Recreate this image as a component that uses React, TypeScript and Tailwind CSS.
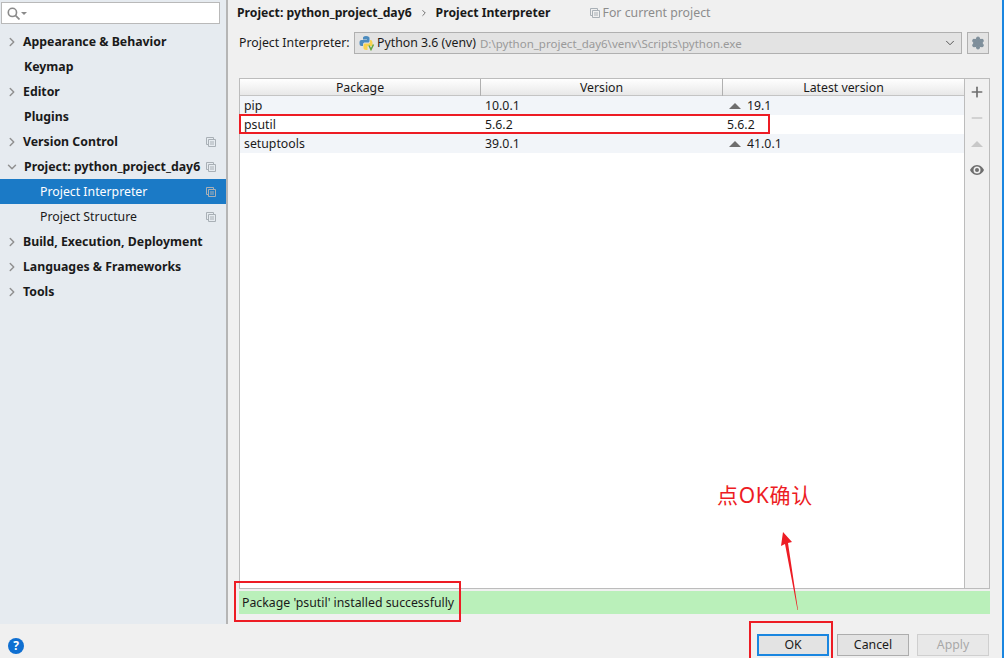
import { ChevronDown, ChevronRight, Minus, Plus, Settings } from "lucide-react";

const NAV = [
  { label: "Appearance & Behavior", arrow: "right" },
  { label: "Keymap", indent: true },
  { label: "Editor", arrow: "right" },
  { label: "Plugins", indent: true },
  { label: "Version Control", arrow: "right", copy: true },
  { label: "Project: python_project_day6", arrow: "down", indent: true, copy: true },
  { label: "Project Interpreter", sub: true, active: true, copy: true },
  { label: "Project Structure", sub: true, copy: true },
  { label: "Build, Execution, Deployment", arrow: "right" },
  { label: "Languages & Frameworks", arrow: "right" },
  { label: "Tools", arrow: "right" },
];

const PACKAGES = [
  { name: "pip", version: "10.0.1", latest: "19.1", up: true },
  { name: "psutil", version: "5.6.2", latest: "5.6.2", up: false },
  { name: "setuptools", version: "39.0.1", latest: "41.0.1", up: true },
];

function CopyIcon({ color = "#a9b0b6" }: { color?: string }) {
  return (
    <svg width="10" height="10" viewBox="0 0 10 10" fill="none" stroke={color}>
      <path d="M2.500 7.500H.5V.5h7v2" />
      <path d="M2.500 2.500h7v7h-7zM4 5h4M4 7h4" />
    </svg>
  );
}

function PythonIcon() {
  return (
    <svg width="16" height="16" viewBox="0 0 16 16" className="shrink-0">
      <path d="M7 1C4.500 1 4 2 4 3v1.500h4V5H2.500C1 5 .5 6.300.5 8s.5 3 2 3H4V9.500C4 8 5 7.500 6 7.500h3c1 0 1.500-.7 1.500-1.500V3c0-1-1-2-3.500-2z" fill="#4b8bbe" />
      <path d="M11 5v1.500C11 8 10 8.500 9 8.500H6c-1 0-1.500.7-1.500 1.500v3c0 1 1 2 3 2h1v-4h5V8c0-1.500-.5-3-2-3z" fill="#f7d34f" />
      <path d="M10 10.500l2 4 2.500-5" fill="none" stroke="#62a53e" strokeWidth="1.500" />
    </svg>
  );
}

function EyeIcon() {
  return (
    <svg width="14" height="10" viewBox="0 0 14 10" className="mt-[18px]">
      <path d="M7 0C3.500 0 1 3 0 5c1 2 3.500 5 7 5s6-3 7-5c-1-2-3.500-5-7-5z" fill="#6e6e6e" />
      <circle cx="7" cy="5" r="3.500" fill="#f0f0f0" />
      <circle cx="7" cy="5" r="2" fill="#6e6e6e" />
    </svg>
  );
}

export default function App() {
  return (
    <div className="relative flex h-[658px] w-[1005px] overflow-hidden bg-white font-['Noto_Sans','Noto_Sans_CJK_SC',sans-serif] text-[12.3px] whitespace-nowrap text-[#1a1a1a]">
      <div className="flex w-[1002px] shrink-0 flex-col bg-[#f0f0f0]">
        <div className="flex min-h-0 flex-1">
          <aside className="flex w-[228px] shrink-0 flex-col border-r-2 border-[#b5b5b5] bg-[#e6ebf0]">
            <div className="mx-[1px] mt-[2px] flex h-[22px] w-[219px] items-center gap-[1px] border border-[#b9b9b9] bg-white pl-[5px]">
              <svg width="13" height="13" viewBox="0 0 12 12" fill="none" stroke="#8a8a8a" strokeWidth="1.500">
                <circle cx="5" cy="5" r="3.800" />
                <path d="M8 8l3.500 3.500" />
              </svg>
              <span className="h-0 w-0 border-x-[3px] border-t-[3px] border-x-transparent border-t-[#8a8a8a]" />
            </div>
            <nav className="mt-[5px] flex flex-col">
              {NAV.map((n) => (
                <div
                  key={n.label}
                  className={`flex h-[25px] items-center ${n.active ? "bg-[#1b7ac6] text-white" : ""} ${n.sub ? "pl-[40px]" : n.indent ? "pl-[24px]" : "pl-[23px]"}`}
                >
                  {n.arrow === "right" && <ChevronRight className="absolute left-[5px] h-[14px] w-[14px] text-[#909090]" strokeWidth={2.500} />}
                  {n.arrow === "down" && <ChevronDown className="absolute left-[5px] h-[14px] w-[14px] text-[#909090]" strokeWidth={2.500} />}
                  <span className={n.sub ? "pt-[1px]" : "pt-[1px] text-[12.3px] font-bold"}>{n.label}</span>
                  {n.copy && (
                    <span className="ml-auto pr-[10px]">
                      <CopyIcon />
                    </span>
                  )}
                </div>
              ))}
            </nav>
          </aside>

          <main className="flex min-w-0 flex-1 flex-col pl-[9px] pr-[12px]">
            <div className="flex h-[26px] items-center text-[12.2px] font-bold">
              <span>Project: python_project_day6</span>
              <ChevronRight className="mx-[7px] h-[10px] w-[10px] text-[#555]" strokeWidth={2} />
              <span>Project Interpreter</span>
              <span className="ml-[39px] mr-[3px] font-normal">
                <CopyIcon />
              </span>
              <span className="text-[12.3px] font-normal text-[#8c8c8c]">For current project</span>
            </div>

            <div className="mt-[6px] flex h-[22px] items-center pl-[2px]">
              <span className="w-[115px] shrink-0">Project Interpreter:</span>
              <div className="flex h-[22px] w-[608px] items-center border border-[#b0b0b0] bg-[#e3e3e3] pl-[4px] pr-[4px]">
                <PythonIcon />
                <span className="ml-[2px] pt-[1px]">Python 3.6 (venv)</span>
                <span className="ml-[4px] pt-[1px] text-[11.5px] text-[#9a9a9a]">D:\python_project_day6\venv\Scripts\python.exe</span>
                <ChevronDown className="ml-auto h-[14px] w-[14px] text-[#444]" strokeWidth={1.500} />
              </div>
              <div className="ml-[5px] flex h-[22px] w-[22px] items-center justify-center border border-[#b0b0b0] bg-[#e3e3e3]">
                <Settings className="h-[14px] w-[14px] fill-[#7f8f9b] text-[#7f8f9b]" />
              </div>
            </div>

            <div className="mt-[24px] ml-[2px] flex min-h-0 flex-1 border border-[#bcbcbc] bg-white">
              <div className="flex min-w-0 flex-1 flex-col">
                <div className="flex h-[17px] items-center border-b border-[#c4c4c4] bg-gradient-to-b from-white to-[#e8e8e8] leading-[16px]">
                  <span className="w-[241px] border-r border-[#b0b0b0] pt-[1px] text-center">Package</span>
                  <span className="w-[242px] border-r border-[#b0b0b0] pt-[1px] text-center">Version</span>
                  <span className="flex-1 pt-[1px] text-center">Latest version</span>
                </div>
                {PACKAGES.map((p, i) => (
                  <div key={p.name} className={`flex h-[19px] items-center pt-[1px] ${i % 2 === 0 ? "bg-[#f2f5f9]" : "bg-white"}`}>
                    <span className="w-[241px] pl-[4px]">{p.name}</span>
                    <span className="w-[242px] pl-[4px]">{p.version}</span>
                    <span className={`flex flex-1 items-center ${p.up ? "pl-[6px]" : "pl-[4px]"}`}>
                      {p.up && <span className="mr-[6px] h-0 w-0 border-x-[6px] border-b-[6px] border-x-transparent border-b-[#6e6e6e]" />}
                      {p.latest}
                    </span>
                  </div>
                ))}
              </div>
              <div className="flex w-[25px] shrink-0 flex-col items-center border-l border-[#bcbcbc] bg-[#f0f0f0] pt-[5px]">
                <Plus className="h-[16px] w-[16px] text-[#6e6e6e]" strokeWidth={2.500} />
                <Minus className="mt-[10px] h-[16px] w-[16px] text-[#c8c8c8]" strokeWidth={2.500} />
                <span className="mt-[15px] h-0 w-0 border-x-[6px] border-b-[6px] border-x-transparent border-b-[#c8c8c8]" />
                <EyeIcon />
              </div>
            </div>

            <div className="mt-[2px] mb-[10px] ml-[2px] flex h-[23px] items-center bg-[#baf0ba] pl-[3px] pt-[1px]">Package 'psutil' installed successfully</div>
          </main>
        </div>

        <footer className="flex h-[34px] shrink-0 items-start pl-[8px] pr-[13px] pt-[10px]">
          <span className="mt-[4px] flex h-[16px] w-[16px] items-center justify-center rounded-full bg-[#0f6fd1] text-[12px] font-bold text-white">?</span>
          <div className="ml-auto flex gap-[8px]">
            <button className="h-[22px] w-[72px] border-2 border-[#1a86e0] bg-[#e3e3e3]">OK</button>
            <button className="h-[22px] w-[72px] border border-[#adadad] bg-[#e3e3e3]">Cancel</button>
            <button className="h-[22px] w-[72px] border border-[#cfcfcf] bg-[#e8e8e8] text-[#a8a8a8]">Apply</button>
          </div>
        </footer>
      </div>
      <div className="w-[3px] border-l-2 border-[#1a86e0] bg-white" />

      {/* red annotations drawn over the screenshot */}
      <div className="absolute left-[239px] top-[114px] h-[20px] w-[531px] border-2 border-[#ed1c24]" />
      <div className="absolute left-[234px] top-[581px] h-[41px] w-[227px] border-2 border-[#ed1c24]" />
      <div className="absolute left-[749px] top-[621px] h-[37px] w-[84px] border-2 border-b-0 border-[#ed1c24]" />
      <span className="absolute left-[717px] top-[481px] text-[21px] leading-[28px] tracking-[0.7px] text-[#ed1c24]">点OK确认</span>
      <svg className="absolute left-[775px] top-[528px]" width="30" height="86" viewBox="0 0 30 86">
        <path d="M8 4L17 14L13 15L23 82L22.500 82L10 16L6 18z" fill="#ed1c24" />
      </svg>
    </div>
  );
}
